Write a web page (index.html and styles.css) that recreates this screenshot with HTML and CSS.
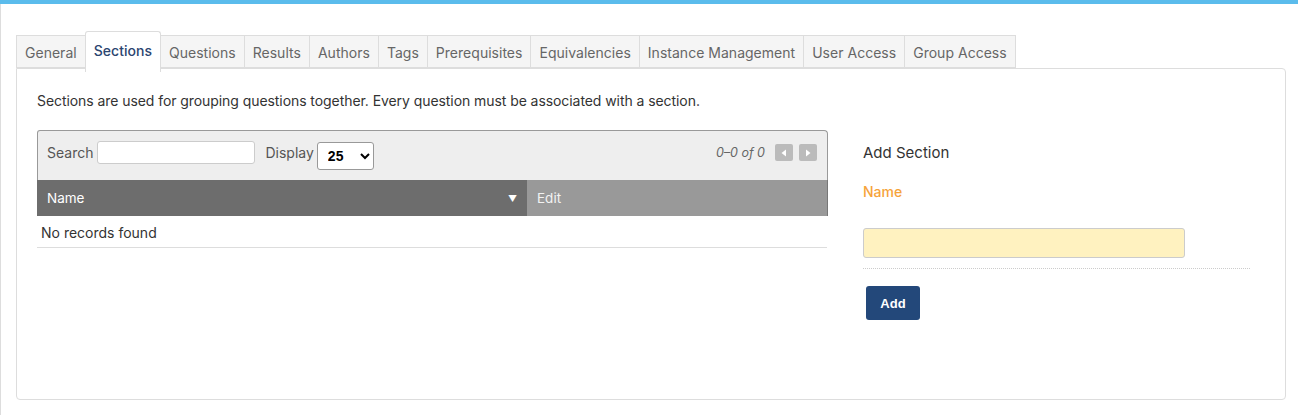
FILE: index.html
```html
<!DOCTYPE html>
<html>
<head>
<meta charset="utf-8">
<link rel="stylesheet" href="styles.css">
</head>
<body>
<div class="topbar"></div>
<div class="page">
  <div class="tabs">
    <div class="tab">General</div>
    <div class="tab active">Sections</div>
    <div class="tab">Questions</div>
    <div class="tab">Results</div>
    <div class="tab">Authors</div>
    <div class="tab">Tags</div>
    <div class="tab">Prerequisites</div>
    <div class="tab">Equivalencies</div>
    <div class="tab">Instance Management</div>
    <div class="tab">User Access</div>
    <div class="tab">Group Access</div>
  </div>
  <div class="panel">
    <p class="desc">Sections are used for grouping questions together. Every question must be associated with a section.</p>
    <div class="cols">
      <div class="grid">
        <div class="toolbar">
          <label class="lbl">Search</label>
          <input class="search" type="text">
          <label class="lbl disp">Display</label>
          <select class="sel"><option>25</option></select>
          <div class="pager">
            <span class="count">0–0 of 0</span>
            <span class="pbtn"><svg width="10" height="10" viewBox="0 0 10 10"><path d="M7 1.5 L2.5 5 L7 8.5 Z" fill="#fff"/></svg></span>
            <span class="pbtn"><svg width="10" height="10" viewBox="0 0 10 10"><path d="M3 1.5 L7.5 5 L3 8.5 Z" fill="#fff"/></svg></span>
          </div>
        </div>
        <div class="head">
          <div class="hname">Name<span class="sort">▼</span></div>
          <div class="hedit">Edit</div>
        </div>
        <div class="empty">No records found</div>
      </div>
      <div class="form">
        <div class="ftitle">Add Section</div>
        <div class="flabel">Name</div>
        <input class="finput" type="text">
        <div class="sep"></div>
        <button class="addbtn">Add</button>
      </div>
    </div>
  </div>
</div>
</body>
</html>
```

FILE: styles.css
```css
* { box-sizing: border-box; }
html, body { margin: 0; padding: 0; background: #fff; }
body {
  font-family: Inter, "Noto Sans", sans-serif;
  font-size: 14px;
  color: #333;
  height: 415px;
  overflow: hidden;
}
.topbar { height: 4px; background: #5bbcec; }
.page {
  border-left: 1px solid #ddd;
  padding: 31px 12px 0 15px;
  height: 411px;
}
.tabs {
  display: flex;
  height: 33px;
  align-items: flex-start;
}
.tab {
  height: 33px;
  padding: 1px 8px 0 8px;
  border: 1px solid #ddd;
  border-left: none;
  background: #f5f5f5;
  color: #666;
  display: flex;
  align-items: center;
  font-size: 14px;
  letter-spacing: 0.02px;
  white-space: nowrap;
}
.tab:first-child { border-left: 1px solid #ddd; }
.tab.active {
  position: relative;
  z-index: 1;
  margin-top: -4px;
  height: 41px;
  background: #fff;
  color: #2b4570;
  font-weight: 500;
  border-bottom: none;
  border-radius: 3px 3px 0 0;
  padding-bottom: 4px;
  border-left: 1px solid #ddd;
  margin-left: -1px;
}
.panel {
  border: 1px solid #ddd;
  border-radius: 0 4px 4px 4px;
  height: 332px;
  padding: 0 20px;
}
.desc {
  margin: 23px 0 0 0;
  font-size: 14px;
  letter-spacing: -0.07px;
  color: #333;
}
.cols {
  display: flex;
  gap: 35px;
  margin-top: 21px;
}
.grid { width: 791px; }
.toolbar {
  height: 50px;
  background: #eee;
  border: 1px solid #999;
  border-bottom: none;
  border-radius: 3px 4px 0 0;
  display: flex;
  align-items: center;
  padding: 0 10px 0 9px;
}
.lbl { color: #555; font-size: 14px; margin-top: -6px; }
.search {
  width: 158px;
  height: 23px;
  margin: -6px 0 0 4px;
  border: 1px solid #ccc;
  border-radius: 3px;
  background: #fff;
}
.disp { margin-left: 10px; }
.sel {
  width: 57px;
  height: 28px;
  margin: 0 0 0 3px;
  border: 1px solid #999;
  border-radius: 3px;
  background: #fff;
  font-family: "Liberation Sans", Arial, sans-serif;
  font-weight: bold;
  font-size: 14px;
  padding-left: 6px;
}
.pager {
  margin-left: auto;
  display: flex;
  align-items: center;
  gap: 6px;
  margin-top: -6px;
}
.count { font-style: italic; color: #666; font-size: 12.5px; margin-right: 4px; }
.pbtn {
  width: 18px;
  height: 17px;
  background: #bbb;
  border-radius: 2px;
  display: flex;
  align-items: center;
  justify-content: center;
}
.head {
  display: flex;
  height: 36px;
  color: #fff;
}
.hname {
  width: 490px;
  background: #6d6d6d;
  display: flex;
  align-items: center;
  padding-left: 10px;
  position: relative;
  font-size: 13.5px;
}
.sort {
  margin-left: auto;
  margin-right: 10px;
  font-size: 9px;
}
.hedit {
  flex: 1;
  background: #999;
  display: flex;
  align-items: center;
  padding-left: 10px;
  color: #f2f2f2;
  font-size: 13.5px;
  border-right: 1px solid #777;
}
.empty {
  height: 32px;
  border-bottom: 1px solid #ddd;
  padding: 8px 0 0 4px;
  font-size: 14px;
  color: #333;
  width: 790px;
}
.form { width: 387px; padding-top: 13px; }
.ftitle { font-size: 15px; color: #333; }
.flabel {
  color: #f6a33a;
  font-weight: 500;
  font-size: 14px;
  margin-top: 21px;
}
.finput {
  display: block;
  margin-top: 28px;
  width: 322px;
  height: 30px;
  background: #fff2c0;
  border: 1px solid #ccc;
  border-radius: 3px;
}
.sep {
  border-top: 1px dotted #ccc;
  margin-top: 10px;
}
.addbtn {
  margin: 17px 0 0 3px;
  width: 54px;
  height: 34px;
  background: #23487a;
  color: #fff;
  border: none;
  border-radius: 3px;
  font-family: "Liberation Sans", Arial, sans-serif;
  font-size: 13px;
  font-weight: bold;
}
```
